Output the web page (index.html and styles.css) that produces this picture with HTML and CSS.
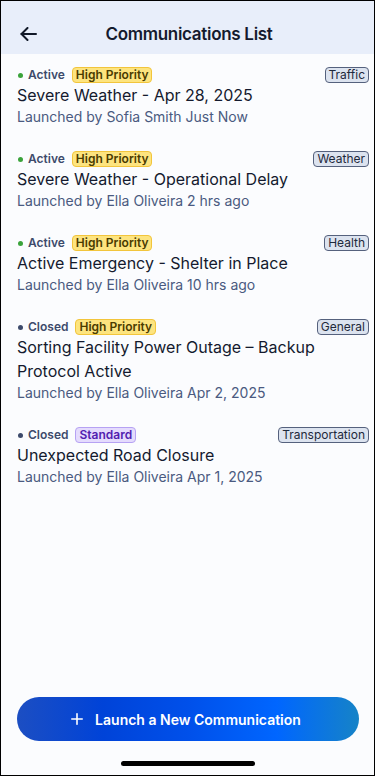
FILE: index.html
```html
<!DOCTYPE html>
<html lang="en">
<head>
<meta charset="utf-8">
<meta name="viewport" content="width=device-width, initial-scale=1">
<title>Communications List</title>
<link rel="stylesheet" href="styles.css">
</head>
<body>
<div class="screen">
  <header class="topbar">
    <button class="back" aria-label="Back">
      <svg width="17" height="14" viewBox="0 0 17 14" fill="none" stroke="#111827" stroke-width="2" stroke-linecap="round" stroke-linejoin="round"><path d="M16 7H1.5"/><path d="M7.5 1L1.5 7L7.5 13"/></svg>
    </button>
    <h1 class="title">Communications List</h1>
    <span class="spacer"></span>
  </header>

  <main class="list">
    <article class="item">
      <div class="meta">
        <span class="status"><span class="dot dot-active"></span>Active</span>
        <span class="badge badge-high">High Priority</span>
        <span class="tag">Traffic</span>
      </div>
      <h2 class="item-title">Severe Weather - Apr 28, 2025</h2>
      <p class="item-sub">Launched by Sofia Smith Just Now</p>
    </article>

    <article class="item">
      <div class="meta">
        <span class="status"><span class="dot dot-active"></span>Active</span>
        <span class="badge badge-high">High Priority</span>
        <span class="tag">Weather</span>
      </div>
      <h2 class="item-title">Severe Weather - Operational Delay</h2>
      <p class="item-sub">Launched by Ella Oliveira 2 hrs ago</p>
    </article>

    <article class="item">
      <div class="meta">
        <span class="status"><span class="dot dot-active"></span>Active</span>
        <span class="badge badge-high">High Priority</span>
        <span class="tag">Health</span>
      </div>
      <h2 class="item-title">Active Emergency - Shelter in Place</h2>
      <p class="item-sub">Launched by Ella Oliveira 10 hrs ago</p>
    </article>

    <article class="item">
      <div class="meta">
        <span class="status"><span class="dot dot-closed"></span>Closed</span>
        <span class="badge badge-high">High Priority</span>
        <span class="tag">General</span>
      </div>
      <h2 class="item-title">Sorting Facility Power Outage – Backup Protocol Active</h2>
      <p class="item-sub">Launched by Ella Oliveira Apr 2, 2025</p>
    </article>

    <article class="item">
      <div class="meta">
        <span class="status"><span class="dot dot-closed"></span>Closed</span>
        <span class="badge badge-standard">Standard</span>
        <span class="tag">Transportation</span>
      </div>
      <h2 class="item-title">Unexpected Road Closure</h2>
      <p class="item-sub">Launched by Ella Oliveira Apr 1, 2025</p>
    </article>
  </main>

  <footer class="footer">
    <button class="launch">
      <svg width="12" height="12" viewBox="0 0 12 12" fill="none" stroke="#ffffff" stroke-width="1.6" stroke-linecap="round"><path d="M6 0.8V11.2"/><path d="M0.8 6H11.2"/></svg>
      <span>Launch a New Communication</span>
    </button>
    <div class="home-indicator"></div>
  </footer>
</div>
</body>
</html>
```

FILE: styles.css
```css
* {
  box-sizing: border-box;
}

html, body {
  margin: 0;
  padding: 0;
}

body {
  font-family: Inter, "Noto Sans", "Liberation Sans", sans-serif;
  background: #ffffff;
}

.screen {
  width: 375px;
  height: 776px;
  border: 1px solid #000000;
  background: #fbfcfe;
  display: flex;
  flex-direction: column;
  overflow: hidden;
}

.topbar {
  height: 53px;
  flex: 0 0 53px;
  background: #e8eefa;
  padding: 12px 0 0 0;
  display: grid;
  grid-template-columns: 1fr auto 1fr;
  align-items: center;
}

.back {
  justify-self: start;
  margin-left: 17px;
  width: 20px;
  height: 20px;
  padding: 0;
  border: 0;
  background: transparent;
  display: flex;
  align-items: center;
  justify-content: center;
}

.title {
  margin: 0;
  font-size: 17px;
  font-weight: 600;
  color: #141a2e;
  line-height: 22px;
  letter-spacing: -0.3px;
  padding-left: 3px;
}

.list {
  flex: 1;
  padding: 13px 5px 0 16px;
  display: flex;
  flex-direction: column;
  gap: 24px;
}

.meta {
  display: flex;
  align-items: center;
  height: 16px;
  margin-bottom: 0;
}

.status {
  display: flex;
  align-items: center;
  font-size: 12px;
  font-weight: 600;
  color: #3d4a6b;
  line-height: 16px;
  margin-right: 7px;
}

.dot {
  width: 5px;
  height: 5px;
  border-radius: 50%;
  margin-left: 1px;
  margin-right: 5px;
}

.dot-active {
  background: #3ba33b;
}

.dot-closed {
  background: #3d4a6b;
}

.badge {
  font-size: 12px;
  font-weight: 600;
  line-height: 14px;
  padding: 0 3px;
  border-radius: 4px;
  border: 1px solid;
}

.badge-high {
  background: #fde47f;
  border-color: #f2c53c;
  color: #4a3b00;
}

.badge-standard {
  background: #e4dbfd;
  border-color: #b6a2f3;
  color: #5220b0;
}

.tag {
  margin-left: auto;
  font-size: 12px;
  font-weight: 400;
  line-height: 14px;
  padding: 0 3px;
  border-radius: 4px;
  border: 1px solid #55617d;
  background: #dce3ef;
  color: #1e293b;
}

.item-title {
  margin: 0;
  font-size: 16px;
  font-weight: 400;
  line-height: 24px;
  color: #141a2e;
}

.item-sub {
  margin: 0;
  font-size: 14px;
  font-weight: 400;
  line-height: 20px;
  color: #4a5a80;
}

.footer {
  padding: 0 15px 9px 16px;
  display: flex;
  flex-direction: column;
  align-items: center;
}

.launch {
  width: 100%;
  height: 44px;
  border: 0;
  border-radius: 22px;
  background: linear-gradient(90deg, #1c4ec2 0%, #0043d8 25%, #0050ea 50%, #0066ff 76%, #1683c7 100%);
  color: #ffffff;
  font-family: Inter, "Noto Sans", "Liberation Sans", sans-serif;
  font-size: 14px;
  font-weight: 600;
  display: flex;
  align-items: center;
  justify-content: center;
  gap: 12px;
  padding: 0 4px 0 0;
}

.home-indicator {
  margin-top: 20px;
  width: 134px;
  height: 5px;
  border-radius: 3px;
  background: #000000;
}
```
